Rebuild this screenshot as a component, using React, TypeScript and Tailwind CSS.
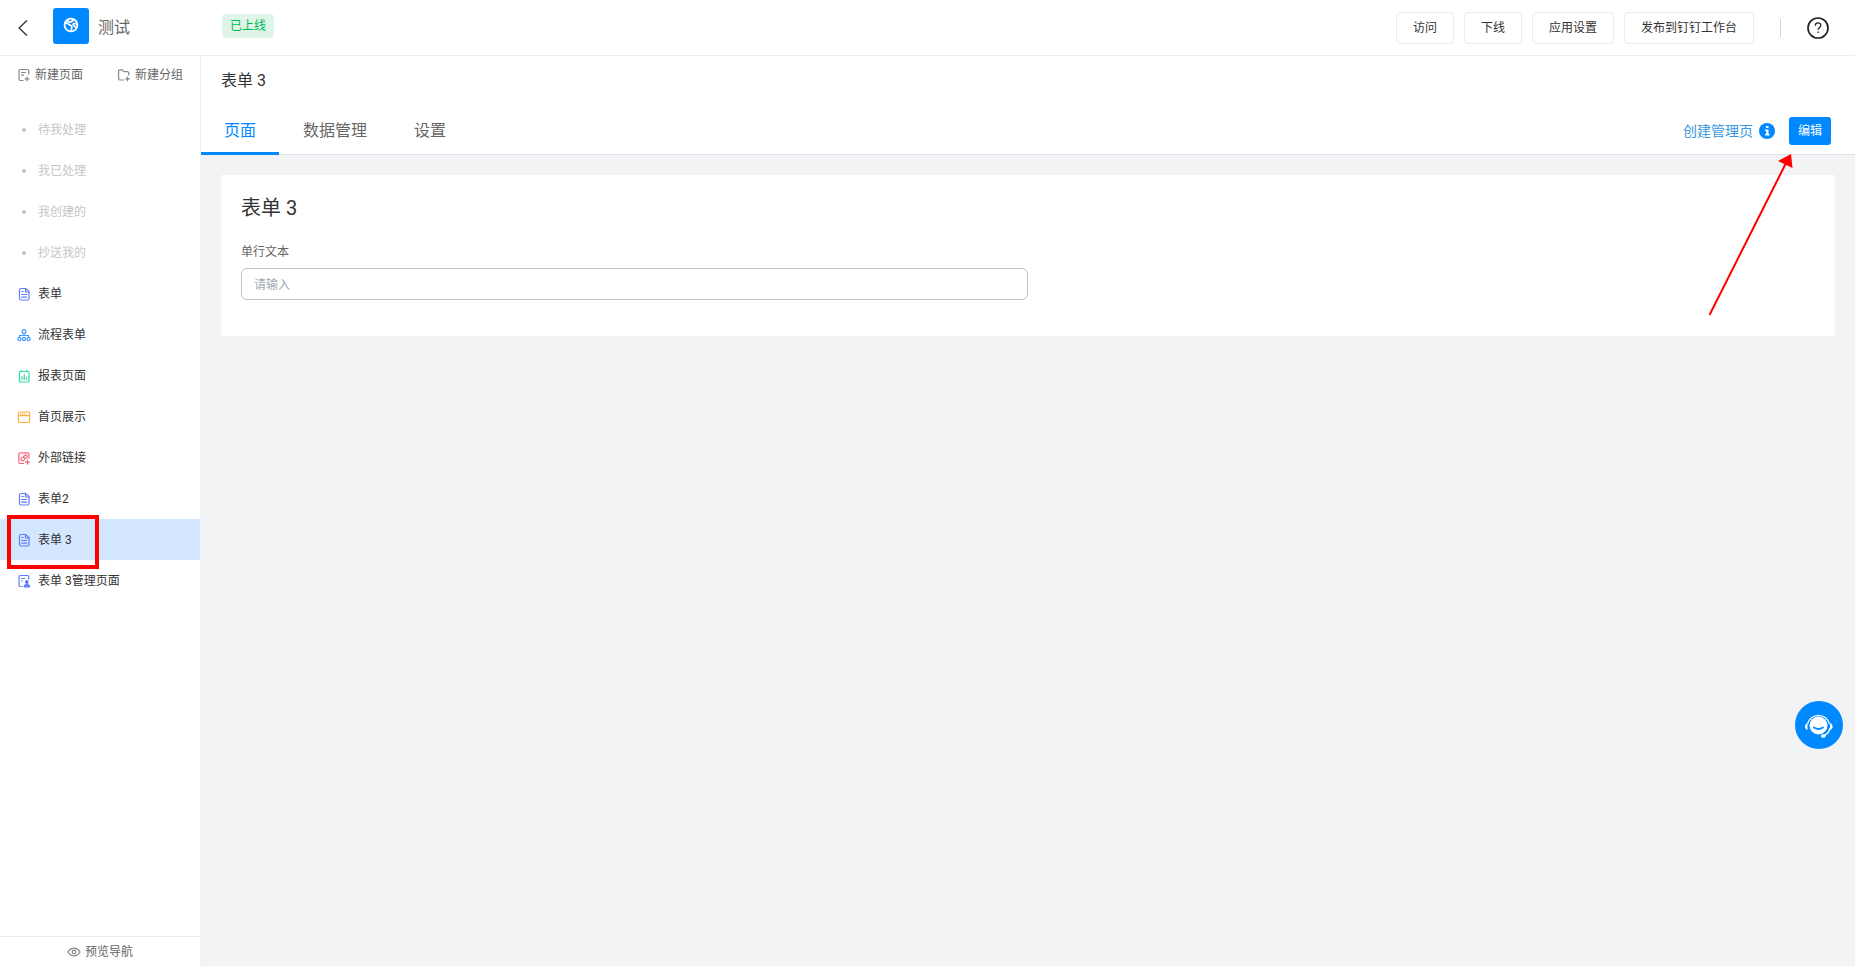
import React, { useState } from 'react';

type IconProps = { className?: string };

function Svg({ children, className = '', size = 14 }: { children: React.ReactNode; className?: string; size?: number }) {
  return (
    <svg
      width={size}
      height={size}
      viewBox="0 0 14 14"
      fill="none"
      stroke="currentColor"
      strokeWidth="1.2"
      strokeLinecap="round"
      strokeLinejoin="round"
      className={`shrink-0 ${className}`}
      aria-hidden="true"
    >
      {children}
    </svg>
  );
}

function FormIcon() {
  return (
    <Svg className="text-[#5f7dfb]">
      <path d="M4 1.500h4.500l3.500 3v7a1.500 1.500 0 0 1-1.500 1.500h-6.500A1.500 1.500 0 0 1 2.500 11.500v-8.500A1.500 1.500 0 0 1 4 1.500z" />
      <path d="M8.500 1.500v3.500H12M4.700 4.500h1.500M4.700 7.500h5M4.700 10.200h5" />
    </Svg>
  );
}

function FlowIcon() {
  return (
    <Svg className="text-[#3f9dff]">
      <circle cx="7" cy="3.500" r="1.900" />
      <path d="M7 5.400v2.100M2.500 9V7.500h9V9" />
      <circle cx="2.400" cy="11" r="1.600" />
      <circle cx="7" cy="11" r="1.600" />
      <circle cx="11.600" cy="11" r="1.600" />
    </Svg>
  );
}

function ReportIcon() {
  return (
    <Svg className="text-[#2fdb9f]">
      <rect x="2.500" y="2.500" width="9.500" height="10.500" rx="1" />
      <path d="M4.800 1v1.500M9.700 1v1.500M5 7.500v3M7.200 5.500v5M9.500 8.500v2" />
    </Svg>
  );
}

function HomeIcon() {
  return (
    <Svg className="text-[#ffac3f]">
      <rect x="1.500" y="2" width="11" height="10.500" rx="1.200" />
      <path d="M1.500 5.700h11M3.700 3.900H4M5.700 3.900H6M7.700 3.900H8" />
    </Svg>
  );
}

function LinkIcon() {
  return (
    <Svg className="text-[#fb6680]">
      <path d="M6.500 12.500H3.200A1.300 1.300 0 0 1 1.900 11.200V3.200A1.300 1.300 0 0 1 3.200 1.900h7.500A1.300 1.300 0 0 1 12 3.200v4" />
      <path d="M6.500 5.500 8 4.200a1.500 1.500 0 0 1 2 2.100L8.600 7.600M7.300 6.400 5.200 6.500a1.600 1.600 0 0 0-.6 2.800c1 .8 2.100.2 2.500-.5l.8-1.400M10.500 9.200v4M8.500 11.200h4" />
    </Svg>
  );
}

function ManageIcon() {
  return (
    <Svg className="text-[#5f7dfb]">
      <path d="M5 12.500H3.200A1.200 1.200 0 0 1 2 11.300V2.700A1.200 1.200 0 0 1 3.200 1.500h7.300a1.200 1.200 0 0 1 1.200 1.200V5M4.500 4.500h3.300M4.500 7h.8" />
      <circle cx="9.800" cy="8" r="1.300" fill="currentColor" />
      <path d="M7.200 12.800c0-3 5.400-3 5.400 0z" fill="currentColor" />
    </Svg>
  );
}

function NewPageIcon({ className }: IconProps) {
  return (
    <Svg className={className}>
      <path d="M6 12.500H3.200A1.200 1.200 0 0 1 2 11.300V2.700a1.200 1.200 0 0 1 1.200-1.200h7.300a1.200 1.200 0 0 1 1.200 1.200V6M4.500 4.500h4M4.500 7.200h2M10 8.800v4M8 10.800h4" />
    </Svg>
  );
}

function NewGroupIcon({ className }: IconProps) {
  return (
    <Svg className={className}>
      <path d="M6.500 12H2.800a1.200 1.200 0 0 1-1.200-1.200V2.900a1 1 0 0 1 1-1h2.700l1.700 1.800h3.500a1.200 1.200 0 0 1 1.200 1.200V7M10.500 8.800v4M8.500 10.800h4" />
    </Svg>
  );
}

const menuItems: { name: string; icon?: React.ReactNode }[] = [
  { name: '待我处理' },
  { name: '我已处理' },
  { name: '我创建的' },
  { name: '抄送我的' },
  { name: '表单', icon: <FormIcon /> },
  { name: '流程表单', icon: <FlowIcon /> },
  { name: '报表页面', icon: <ReportIcon /> },
  { name: '首页展示', icon: <HomeIcon /> },
  { name: '外部链接', icon: <LinkIcon /> },
  { name: '表单2', icon: <FormIcon /> },
  { name: '表单 3', icon: <FormIcon /> },
  { name: '表单 3管理页面', icon: <ManageIcon /> },
];

const tabs = ['页面', '数据管理', '设置'];
const actions = ['访问', '下线', '应用设置', '发布到钉钉工作台'];

function Header() {
  return (
    <header className="flex h-14 shrink-0 items-center border-b border-[#ededee] bg-white">
      <button className="ml-4 flex h-6 w-4 items-center justify-start text-[#333]" aria-label="返回">
        <svg width="12" height="18" viewBox="0 0 12 18" fill="none" stroke="currentColor" strokeWidth="1.300">
          <path d="M11 1.500 3 9l8 7.500" />
        </svg>
      </button>
      <div className="mb-[3px] ml-[21px] flex h-9 w-9 items-center justify-center rounded-[3px] bg-[#0089ff]">
        <svg width="16" height="16" viewBox="0 0 16 16" fill="none" stroke="#fff" strokeWidth="1.800" className="mb-[2px]">
          <circle cx="8" cy="8" r="6.400" />
          <path d="M1.800 5.500c1.800 0 2.200 1.200 3.700 1.300M4.500 3c.5 2.300 2.200 2.500 3.800 1.800L11 2.500M5.200 6.500c0 1.800 3.500 1.200 3.600 3.300 0 1.600-.3 2.700-.8 4M14 7.300c-1.600-1.300-3.700-1.300-3.800-.1-.1 1.500 1.700 1.300 2.400 3.500" />
        </svg>
      </div>
      <span className="ml-[9px] w-[124px] text-base text-[#666]">测试</span>
      <span className="mb-1 flex h-6 items-center rounded bg-[#def5e7] px-2 text-xs text-[#00b853]">已上线</span>

      <div className="ml-auto flex items-center gap-[10px]">
        {actions.map((name) => (
          <button key={name} className="h-8 rounded border border-[#ebecee] px-4 text-xs text-[#333] hover:bg-gray-50">
            {name}
          </button>
        ))}
      </div>
      <div className="ml-[26px] h-[18px] w-px bg-[#d5d5d5]" />
      <button className="ml-[26px] mr-[26px] text-[#222]" aria-label="帮助">
        <svg width="22" height="22" viewBox="0 0 22 22" fill="none" stroke="currentColor">
          <circle cx="11" cy="11" r="10" strokeWidth="1.700" />
          <path d="M8.300 8.700c0-3.700 5.500-3.500 5.500-.3 0 2-2.700 2.200-2.700 4.300M11.100 14.500v1.500" strokeWidth="1.300" />
        </svg>
      </button>
    </header>
  );
}

function Sidebar() {
  const [selected, setSelected] = useState('表单 3');

  return (
    <aside className="flex w-[201px] shrink-0 flex-col border-r border-[#f1f2f4] bg-white">
      <div className="flex h-[37px] items-center pl-[17px] text-xs text-[#666]">
        <button className="flex items-center gap-1">
          <NewPageIcon className="text-[#888]" /> 新建页面
        </button>
        <button className="ml-[34px] flex items-center gap-1">
          <NewGroupIcon className="text-[#888]" /> 新建分组
        </button>
      </div>

      <nav className="mt-4">
        {menuItems.map(({ name, icon }) => (
          <div key={name} className="relative">
            <button
              onClick={() => setSelected(name)}
              className={`flex h-[41px] w-full items-center gap-[7px] pl-[17px] text-xs ${
                icon ? 'text-[#333]' : 'text-[#c4c5c7]'
              } ${selected === name ? 'bg-[#d3e7ff]' : ''}`}
            >
              {icon ?? (
                <span className="flex w-[14px] justify-center">
                  <span className="h-1 w-1 rounded-full bg-[#c0c1c4]" />
                </span>
              )}
              {name}
            </button>
            {/* highlight frame */}
            {name === '表单 3' && (
              <div className="pointer-events-none absolute -top-1 left-[7px] z-10 h-[54px] w-[92px] border-4 border-[#ff0000]" />
            )}
          </div>
        ))}
      </nav>

      <button className="mt-auto flex h-[30px] items-center justify-center gap-1 border-t border-[#e9eaec] pt-px text-xs text-[#666]">
        <Svg className="text-[#888]">
          <path d="M1 7c2.800-5.200 9.200-5.200 12 0-2.800 5.200-9.200 5.200-12 0z" />
          <circle cx="7" cy="7" r="1.800" />
        </Svg>
        预览导航
      </button>
    </aside>
  );
}

function Arrow() {
  return (
    <svg
      width="100"
      height="170"
      viewBox="0 0 100 170"
      className="pointer-events-none absolute right-[31px] top-[33px] z-10"
      aria-hidden="true"
    >
      <path d="M9.500 165 85.500 14" stroke="#ff0000" strokeWidth="2" />
      <path d="M91 4 78 11l14.500 7z" fill="#ff0000" />
    </svg>
  );
}

export default function App() {
  const [activeTab, setActiveTab] = useState('页面');

  return (
    <div className="flex h-screen flex-col bg-[#f1f3f5] font-['Roboto','Noto_Sans_CJK_SC',sans-serif]">
      <Header />

      <div className="flex min-h-0 flex-1">
        <Sidebar />

        <main className="min-w-0 flex-1">
          <div className="border-b border-[#dfe2e8] bg-white">
            <h1 className="flex h-[50px] items-center pl-5 text-base text-[#333]">表单 3</h1>
            <div className="flex h-12 items-center pr-6">
              <div className="flex gap-px self-stretch" role="tablist">
                {tabs.map((tab) => (
                  <button
                    key={tab}
                    role="tab"
                    aria-selected={activeTab === tab}
                    onClick={() => setActiveTab(tab)}
                    className={`-mb-px border-b-[3px] px-[23px] pt-1 text-base ${
                      activeTab === tab ? 'border-[#0089ff] text-[#0089ff]' : 'border-transparent text-[#666]'
                    }`}
                  >
                    {tab}
                  </button>
                ))}
              </div>
              <div className="ml-auto flex items-center gap-[14px] pt-[2px]">
                <a href="#" className="flex items-center gap-[6px] text-sm text-[#3a96dd]">
                  创建管理页
                  <svg width="16" height="18" viewBox="0 0 16 18" aria-hidden="true">
                    <circle cx="8" cy="9" r="8" fill="#0089ff" />
                    <path d="M7 4h2.500v2H7zM6 7.500h3.500V12h1v1.500H6V12h1.200V9H6z" fill="#fff" />
                  </svg>
                </a>
                <div className="relative">
                  <button className="block h-7 rounded-[3px] bg-[#0089ff] px-[9px] text-xs text-white">编辑</button>
                  <Arrow />
                </div>
              </div>
            </div>
          </div>

          <section className="mx-5 mt-5 bg-white px-5 pb-9 pt-[17px]">
            <h2 className="text-xl leading-8 text-[#333]">表单 3</h2>
            <label htmlFor="single" className="mt-[18px] block text-xs leading-5 text-[#666]">
              单行文本
            </label>
            <input
              id="single"
              type="text"
              placeholder="请输入"
              className="mt-[6px] block h-8 w-1/2 rounded-md border border-[#b9c2cd] px-3 pt-px text-xs text-[#333] outline-none placeholder:text-[#a2a9b5] focus:border-[#0089ff]"
            />
          </section>
        </main>
      </div>

      {/* customer service */}
      <button
        className="fixed bottom-[217px] right-3 flex h-12 w-12 items-center justify-center rounded-full bg-[#0089ff]"
        aria-label="在线客服"
      >
        <svg width="32" height="32" viewBox="0 0 32 32" fill="none" stroke="#fff">
          <circle cx="15.500" cy="16.500" r="9" fill="#fff" stroke="none" />
          <path d="M11 18.500q4.500 3 9 0" stroke="#0089ff" strokeWidth="1.800" strokeLinecap="round" />
          <path d="M4.500 15a11.300 11.300 0 0 1 22 0M27 19c-.8 4-3 6.500-6 7.500" strokeWidth="1.300" />
          <path d="M4.500 14v7C1.500 20 .8 16 4.500 14zM27 14v7C30.200 20 30.800 16 27 14z" fill="#fff" stroke="none" />
          <ellipse cx="20.300" cy="27" rx="2.500" ry="1.700" fill="#fff" stroke="none" />
        </svg>
      </button>
    </div>
  );
}
